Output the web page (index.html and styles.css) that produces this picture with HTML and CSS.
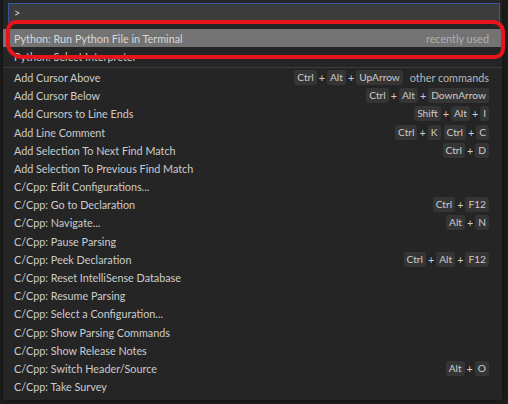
FILE: index.html
```html
<!DOCTYPE html>
<html>
<head>
<meta charset="utf-8">
<link rel="stylesheet" href="styles.css">
</head>
<body>
<div class="editor">
  <div class="palette">
    <div class="input-wrap"><div class="input">&gt;</div></div>
    <div class="list">
      <div class="row selected"><span class="label">Python: Run Python File in Terminal</span><span class="meta">recently used</span></div>
      <div class="row"><span class="label">Python: Select Interpreter</span></div>
      <div class="row sep"><span class="label">Add Cursor Above</span><span class="keys"><kbd>Ctrl</kbd><i>+</i><kbd>Alt</kbd><i>+</i><kbd>UpArrow</kbd></span><span class="group">other commands</span></div>
      <div class="row"><span class="label">Add Cursor Below</span><span class="keys"><kbd>Ctrl</kbd><i>+</i><kbd>Alt</kbd><i>+</i><kbd>DownArrow</kbd></span></div>
      <div class="row"><span class="label">Add Cursors to Line Ends</span><span class="keys"><kbd>Shift</kbd><i>+</i><kbd>Alt</kbd><i>+</i><kbd>I</kbd></span></div>
      <div class="row"><span class="label">Add Line Comment</span><span class="keys"><kbd>Ctrl</kbd><i>+</i><kbd>K</kbd><b></b><kbd>Ctrl</kbd><i>+</i><kbd>C</kbd></span></div>
      <div class="row"><span class="label">Add Selection To Next Find Match</span><span class="keys"><kbd>Ctrl</kbd><i>+</i><kbd>D</kbd></span></div>
      <div class="row"><span class="label">Add Selection To Previous Find Match</span></div>
      <div class="row"><span class="label">C/Cpp: Edit Configurations...</span></div>
      <div class="row"><span class="label">C/Cpp: Go to Declaration</span><span class="keys"><kbd>Ctrl</kbd><i>+</i><kbd>F12</kbd></span></div>
      <div class="row"><span class="label">C/Cpp: Navigate...</span><span class="keys"><kbd>Alt</kbd><i>+</i><kbd>N</kbd></span></div>
      <div class="row"><span class="label">C/Cpp: Pause Parsing</span></div>
      <div class="row"><span class="label">C/Cpp: Peek Declaration</span><span class="keys"><kbd>Ctrl</kbd><i>+</i><kbd>Alt</kbd><i>+</i><kbd>F12</kbd></span></div>
      <div class="row"><span class="label">C/Cpp: Reset IntelliSense Database</span></div>
      <div class="row"><span class="label">C/Cpp: Resume Parsing</span></div>
      <div class="row"><span class="label">C/Cpp: Select a Configuration...</span></div>
      <div class="row"><span class="label">C/Cpp: Show Parsing Commands</span></div>
      <div class="row"><span class="label">C/Cpp: Show Release Notes</span></div>
      <div class="row"><span class="label">C/Cpp: Switch Header/Source</span><span class="keys"><kbd>Alt</kbd><i>+</i><kbd>O</kbd></span></div>
      <div class="row"><span class="label">C/Cpp: Take Survey</span></div>
    </div>
    <div class="annotation"></div>
  </div>
</div>
</body>
</html>
```
FILE: styles.css
```css
html, body {
  margin: 0;
  padding: 0;
}
body {
  width: 508px;
  height: 404px;
  overflow: hidden;
  background: #1e1e1e;
  font-family: Lato, "Noto Sans", sans-serif;
  font-size: 10.8px;
  color: #cccccc;
}
.editor {
  height: 404px;
  padding-left: 3px;
}
.palette {
  position: relative;
  width: 499px;
  height: 400px;
  background: #252526;
  box-shadow: 0 0 6px rgba(0,0,0,0.6);
}
.input-wrap {
  padding: 3px 2px 0 5px;
}
.input {
  height: 18px;
  border: 1px solid #34589a;
  background: #3c3c3c;
  color: #cccccc;
  line-height: 18px;
  padding-left: 5px;
}
.list {
  margin-top: 6px;
}
.row {
  display: flex;
  align-items: center;
  height: 18.2px;
  padding: 0 13px 0 11px;
  white-space: nowrap;
}
.row.selected {
  background: #737373;
  color: #d8d8d8;
}
.row.sep {
  margin-top: 2px;
  border-top: 1px solid #3c3c3c;
}
.label {
  flex: 1;
}
.meta {
  color: #b0b0b0;
}
.keys {
  display: flex;
  align-items: center;
}
.keys i {
  font-style: normal;
  margin: 0 2px;
}
.keys b {
  width: 3px;
}
kbd {
  font-family: inherit;
  font-size: 10.2px;
  background: #353536;
  border-radius: 3px;
  padding: 0 3px;
  height: 15px;
  line-height: 15px;
  color: #cccccc;
}
.group {
  margin-left: 7px;
  color: #b8b8b8;
}
.annotation {
  position: absolute;
  left: 3px;
  top: 20px;
  width: 491px;
  height: 31px;
  border: 4px solid #e8141c;
  border-radius: 10px 12px 10px 16px;
}
```
